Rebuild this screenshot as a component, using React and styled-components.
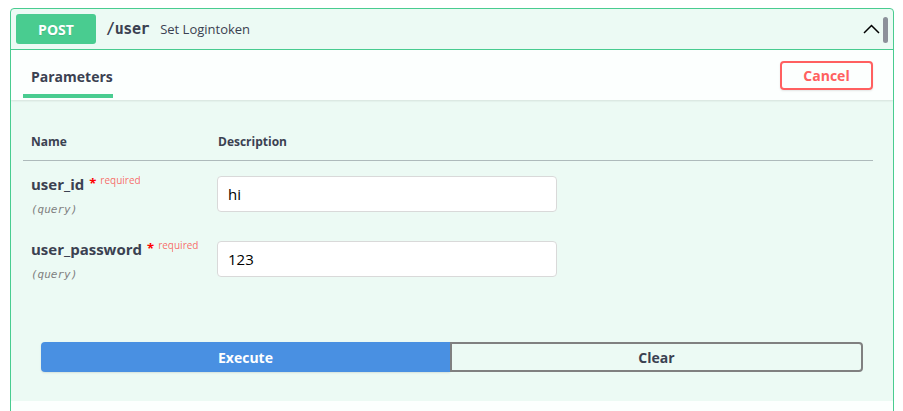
import React from "react";
import styled, { createGlobalStyle } from "styled-components";

const Global = createGlobalStyle`
  html, body { margin: 0; padding: 0; background: #fff; }
  body { font-family: "Open Sans", "Noto Sans", sans-serif; color: #3b4151; }
  * { box-sizing: border-box; }
`;

const Card = styled.div`
  margin: 8px 9px 0 10px;
  border: 1px solid #49cc90;
  border-radius: 4px;
  background: rgba(73, 204, 144, 0.1);
  height: 420px;
  overflow: hidden;
`;

const Summary = styled.div`
  display: flex;
  align-items: center;
  height: 41px;
  padding: 0 5px;
  border-bottom: 1px solid #49cc90;
`;

const Method = styled.span`
  width: 80px;
  height: 30px;
  border-radius: 3px;
  background: #49cc90;
  color: #fff;
  font-weight: 700;
  font-size: 14px;
  display: flex;
  align-items: center;
  justify-content: center;
  text-shadow: 0 1px 0 rgba(0, 0, 0, 0.1);
`;

const Path = styled.span`
  font-family: "DejaVu Sans Mono", monospace;
  font-size: 15px;
  font-weight: 600;
  margin-left: 10px;
  color: #3b4151;
  letter-spacing: -0.4px;
`;

const Desc = styled.span`
  font-size: 13px;
  margin-left: 11px;
  color: #3b4151;
  flex: 1;
`;

const Arrow = styled.svg`
  width: 17px;
  height: 10px;
  margin-right: 3px;
`;

const Handle = styled.span`
  width: 5px;
  height: 26px;
  border-radius: 3px;
  background: #8c919a;
  margin-top: 2px;
`;

const TabBar = styled.div`
  display: flex;
  align-items: center;
  justify-content: space-between;
  height: 50px;
  padding: 0 20px 0 12px;
  background: rgba(255, 255, 255, 0.85);
  box-shadow: 0 1px 2px rgba(0, 0, 0, 0.1);
`;

const Tab = styled.div`
  align-self: stretch;
  display: flex;
  align-items: center;
  padding: 2px 8px 0 8px;
  width: 90px;
  font-size: 14px;
  font-weight: 700;
  position: relative;
  &::after {
    content: "";
    position: absolute;
    left: 0;
    right: 0;
    bottom: 2px;
    height: 4px;
    background: #49cc90;
  }
`;

const CancelBtn = styled.button`
  width: 93px;
  height: 29px;
  border: 2px solid #ff6060;
  border-radius: 4px;
  background: transparent;
  color: #ff6060;
  font-family: inherit;
  font-size: 14px;
  font-weight: 700;
  box-shadow: 0 1px 2px rgba(0, 0, 0, 0.1);
`;

const Params = styled.div`
  padding: 22px 20px 0 12px;
`;

const HeadRow = styled.div`
  display: grid;
  grid-template-columns: 187px 1fr;
  height: 39px;
  align-items: center;
  padding: 0 8px;
  font-size: 12px;
  font-weight: 700;
  border-bottom: 1px solid rgba(59, 65, 81, 0.35);
`;

const Row = styled.div`
  display: grid;
  grid-template-columns: 186px 1fr;
  padding: 0 8px;
  margin-top: ${(p) => p.$mt}px;
`;

const NameCell = styled.div`
  display: flex;
  flex-direction: column;
  margin-top: -3px;
`;

const Name = styled.div`
  font-size: 15px;
  font-weight: 700;
  line-height: 22px;
  display: flex;
  align-items: flex-start;
`;

const Star = styled.span`
  color: red;
  font-size: 13px;
  margin-left: 5px;
  line-height: 20px;
`;

const Req = styled.span`
  color: rgba(255, 0, 0, 0.6);
  font-size: 10px;
  font-weight: 400;
  margin-left: 4px;
  line-height: 14px;
`;

const Where = styled.div`
  font-family: "DejaVu Sans Mono", monospace;
  font-style: italic;
  font-size: 11px;
  color: #808080;
  margin-top: 8px;
`;

const Input = styled.input`
  width: 340px;
  height: 36px;
  border: 1px solid #d9d9d9;
  border-radius: 4px;
  background: #fff;
  padding: 0 10px;
  font-family: inherit;
  font-size: 15px;
  color: #000;
  outline: none;
`;

const Actions = styled.div`
  display: flex;
  padding: 61px 10px 0 18px;
`;

const ExecBtn = styled.button`
  flex: 1;
  height: 30px;
  border: none;
  background: #4990e2;
  color: #fff;
  border-radius: 4px 0 0 4px;
  font-family: inherit;
  font-size: 14px;
  font-weight: 700;
  box-shadow: 0 1px 2px rgba(0, 0, 0, 0.1);
`;

const ClearBtn = styled.button`
  flex: 1;
  height: 30px;
  border: 2px solid #808080;
  background: transparent;
  color: #3b4151;
  border-radius: 0 4px 4px 0;
  font-family: inherit;
  font-size: 14px;
  font-weight: 700;
`;

const Responses = styled.div`
  margin-top: 29px;
  height: 40px;
  background: rgba(255, 255, 255, 0.85);
`;

export default function App() {
  return (
    <>
      <Global />
      <Card>
        <Summary>
          <Method>POST</Method>
          <Path>/user</Path>
          <Desc>Set Logintoken</Desc>
          <Arrow viewBox="0 0 17 10">
            <path d="M1 9 L8.5 1.5 L16 9" fill="none" stroke="#000" strokeWidth="1.5" />
          </Arrow>
          <Handle />
        </Summary>
        <TabBar>
          <Tab>Parameters</Tab>
          <CancelBtn>Cancel</CancelBtn>
        </TabBar>
        <Params>
          <HeadRow>
            <span>Name</span>
            <span>Description</span>
          </HeadRow>
          <Row $mt={15}>
            <NameCell>
              <Name>
                user_id<Star>*</Star><Req>required</Req>
              </Name>
              <Where>(query)</Where>
            </NameCell>
            <Input defaultValue="hi" />
          </Row>
          <Row $mt={25}>
            <NameCell>
              <Name>
                user_password<Star>*</Star><Req>required</Req>
              </Name>
              <Where>(query)</Where>
            </NameCell>
            <Input defaultValue="123" />
          </Row>
          <Actions>
            <ExecBtn>Execute</ExecBtn>
            <ClearBtn>Clear</ClearBtn>
          </Actions>
        </Params>
        <Responses />
      </Card>
    </>
  );
}
